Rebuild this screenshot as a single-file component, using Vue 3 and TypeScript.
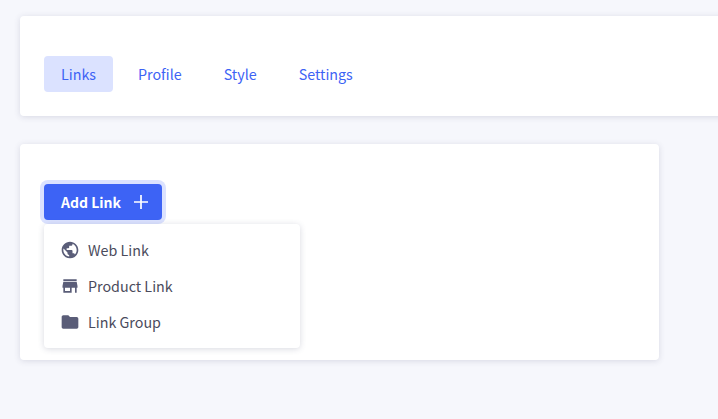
<script setup lang="ts">
import { ref } from "vue";

const tabs = ref<string[]>(["Links", "Profile", "Style", "Settings"]);
const activeTab = ref("Links");

const menuItems = [
  {
    label: "Web Link",
    icon: "M12 2C6.48 2 2 6.48 2 12s4.48 10 10 10 10-4.48 10-10S17.52 2 12 2zm-1 17.93c-3.95-.49-7-3.85-7-7.93 0-.62.08-1.21.21-1.79L9 15v1c0 1.1.9 2 2 2v1.93zm6.9-2.54c-.26-.81-1-1.39-1.9-1.39h-1v-3c0-.55-.45-1-1-1H8v-2h2c.55 0 1-.45 1-1V7h2c1.1 0 2-.9 2-2v-.41c2.93 1.19 5 4.06 5 7.41 0 2.08-.8 3.97-2.1 5.39z",
  },
  {
    label: "Product Link",
    icon: "M20 4H4v2h16V4zm1 10v-2l-1-5H4l-1 5v2h1v6h10v-6h4v6h2v-6h1zm-9 4H6v-4h6v4z",
  },
  {
    label: "Link Group",
    icon: "M10 4H4c-1.1 0-1.99.9-1.99 2L2 18c0 1.1.9 2 2 2h16c1.1 0 2-.9 2-2V8c0-1.1-.9-2-2-2h-8l-2-2z",
  },
];
</script>

<template>
  <main class="page">
    <section class="card tabs-card">
      <nav class="tabs">
        <a
          v-for="tab in tabs"
          :key="tab"
          class="tab"
          :class="{ active: tab === activeTab }"
          @click="activeTab = tab"
        >
          {{ tab }}
        </a>
      </nav>
    </section>

    <section class="card links-card">
      <button class="add-btn" type="button">
        <span>Add Link</span>
        <svg class="plus" width="24" height="24" viewBox="0 0 24 24" fill="currentColor">
          <path d="M19 12.85h-6.15V19h-1.7v-6.15H5v-1.7h6.15V5h1.7v6.15H19v1.7z" />
        </svg>
      </button>
      <ul class="menu">
        <li v-for="item in menuItems" :key="item.label" class="menu-item">
          <svg class="menu-icon" width="20" height="20" viewBox="0 0 24 24" fill="currentColor">
            <path :d="item.icon" />
          </svg>
          <span>{{ item.label }}</span>
        </li>
      </ul>
    </section>
  </main>
</template>

<style>
html,
body {
  margin: 0;
  overflow: hidden;
  background: #f6f7fc;
}
</style>

<style scoped>
.page {
  box-sizing: border-box;
  width: 718px;
  height: 419px;
  padding: 16px 0 0 20px;
  background: #f6f7fc;
  overflow: hidden;
  font-family: "Noto Sans CJK SC", "Noto Sans", sans-serif;
  font-size: 14.3px;
  line-height: 20px;
}

.card {
  box-sizing: border-box;
  background: #fff;
  border-radius: 4px;
  box-shadow: 0 1px 6px rgba(60, 64, 100, 0.16);
}

.tabs-card {
  width: 760px;
  height: 100px;
  padding: 40px 24px 0;
  margin-bottom: 28px;
}

.tabs {
  display: flex;
  gap: 8px;
}

.tab {
  height: 36px;
  padding: 0 17px;
  display: flex;
  align-items: center;
  border-radius: 4px;
  color: #3d63f5;
  cursor: pointer;
}

.tab.active {
  background: #dbe2ff;
}

.links-card {
  width: 639px;
  height: 216px;
  padding: 40px 24px 0;
}

.add-btn {
  box-sizing: border-box;
  display: flex;
  align-items: center;
  justify-content: space-between;
  width: 118px;
  height: 36px;
  padding: 0 9px 0 17px;
  border: 0;
  border-radius: 4px;
  background: #3d63f5;
  box-shadow: 0 0 0 4px #dbe2ff;
  color: #fff;
  font: inherit;
  font-size: 14px;
  font-weight: 700;
  white-space: nowrap;
}

.menu {
  box-sizing: border-box;
  width: 256px;
  margin: 4px 0 0;
  padding: 8px 0;
  list-style: none;
  background: #fff;
  border-radius: 4px;
  box-shadow: 0 1px 6px rgba(60, 64, 100, 0.2);
}

.menu-item {
  display: flex;
  align-items: center;
  gap: 8px;
  height: 36px;
  padding: 0 16px;
  color: #4a4b5c;
}

.menu-icon {
  color: #5a5d78;
}
</style>
